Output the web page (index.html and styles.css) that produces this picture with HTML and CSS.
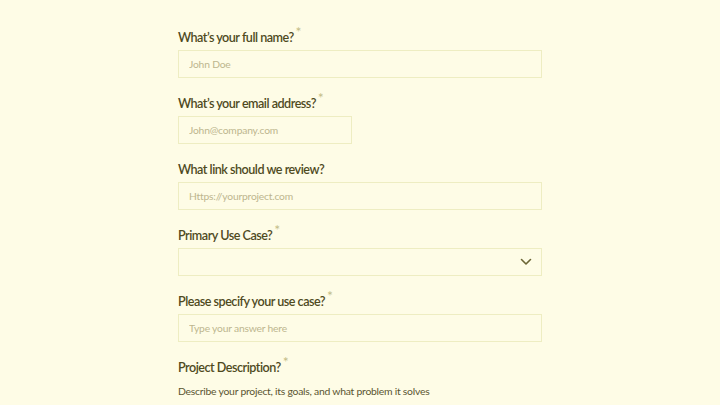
FILE: index.html
```html
<!DOCTYPE html>
<html lang="en">
<head>
  <meta charset="UTF-8">
  <meta name="viewport" content="width=device-width, initial-scale=1.0">
  <title>Project Review Request</title>
  <link rel="stylesheet" href="styles.css">
</head>
<body>
  <form class="review-form">
    <div class="field">
      <label class="field-label">What’s your full name?<span class="req">*</span></label>
      <input type="text" class="text-input" placeholder="John Doe">
    </div>
    <div class="field">
      <label class="field-label">What’s your email address?<span class="req">*</span></label>
      <input type="email" class="text-input short" placeholder="John@company.com">
    </div>
    <div class="field">
      <label class="field-label">What link should we review?</label>
      <input type="text" class="text-input" placeholder="Https://yourproject.com">
    </div>
    <div class="field">
      <label class="field-label">Primary Use Case?<span class="req">*</span></label>
      <div class="select-box">
        <svg class="chevron" width="12" height="8" viewBox="0 0 12 8">
          <path d="M1.5 1.5 L6 6 L10.5 1.5" fill="none" stroke="#6b6535" stroke-width="1.6" stroke-linecap="round" stroke-linejoin="round"/>
        </svg>
      </div>
    </div>
    <div class="field">
      <label class="field-label">Please specify your use case?<span class="req">*</span></label>
      <input type="text" class="text-input" placeholder="Type your answer here">
    </div>
    <div class="field">
      <label class="field-label">Project Description?<span class="req">*</span></label>
      <p class="field-help">Describe your project, its goals, and what problem it solves</p>
    </div>
  </form>
</body>
</html>
```

FILE: styles.css
```css
body {
  margin: 0;
  background-color: #fefce6;
  font-family: Lato, "Open Sans", sans-serif;
  color: #4e4a1c;
}
.review-form {
  width: 364px;
  margin: 0 auto;
  padding-top: 28px;
  display: flex;
  flex-direction: column;
  gap: 16px;
}
.field {
  display: flex;
  flex-direction: column;
  gap: 4px;
}
.field-label {
  display: block;
  height: 18px;
  font-size: 12.6px;
  line-height: 20px;
  font-weight: 600;
  letter-spacing: -0.5px;
  color: #4f4a1e;
}
.req {
  position: relative;
  top: -5px;
  margin-left: 2px;
  font-size: 14px;
  line-height: 0;
  font-weight: 400;
  color: #c4bd88;
}
.text-input {
  box-sizing: border-box;
  height: 28px;
  width: 100%;
  padding: 0 10px;
  background-color: #fefce6;
  border: 1px solid #eeedc2;
  border-radius: 0;
  font-family: inherit;
  font-size: 10.3px;
  letter-spacing: -0.2px;
  color: #4e4a1c;
  outline: none;
}
.text-input::placeholder {
  color: #bdb68e;
}
.text-input.short {
  width: 174px;
}
.select-box {
  box-sizing: border-box;
  height: 28px;
  border: 1px solid #eeedc2;
  display: flex;
  align-items: center;
  justify-content: flex-end;
  padding-right: 9px;
}
.field-help {
  margin: 2px 0 0;
  font-size: 10.4px;
  line-height: 18px;
  letter-spacing: -0.25px;
  color: #5a5530;
}
```
